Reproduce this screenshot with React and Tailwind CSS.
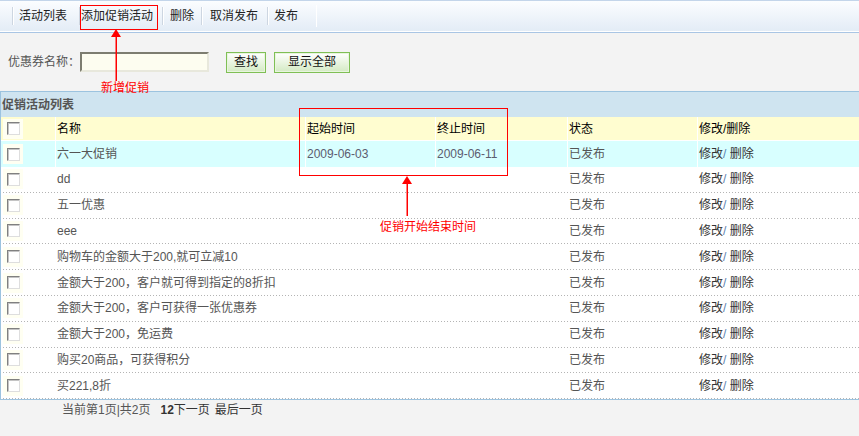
import React from "react";

const rows = [
  { name: "六一大促销", start: "2009-06-03", end: "2009-06-11" },
  { name: "dd" },
  { name: "五一优惠" },
  { name: "eee" },
  { name: "购物车的金额大于200,就可立减10" },
  { name: "金额大于200，客户就可得到指定的8折扣" },
  { name: "金额大于200，客户可获得一张优惠券" },
  { name: "金额大于200，免运费" },
  { name: "购买20商品，可获得积分" },
  { name: "买221,8折" },
];

const Sep = () => (
  <div className="flex h-[18px]">
    <div className="w-px bg-[#cdd6e1]" />
    <div className="w-px bg-white" />
  </div>
);

const Checkbox = () => (
  <div className="flex h-[20px] w-[20px] items-center bg-[#fffff2] pl-[4px]">
    <div className="h-[13px] w-[13px] border border-t-[#808080] border-l-[#808080] border-b-[#dedede] border-r-[#dedede] bg-white shadow-[inset_1px_1px_0_#c4c4c4]" />
  </div>
);

const Row = ({ row, hot }) => (
  <div
    className={
      "grid grid-cols-[54px_250px_130px_132px_130px_1fr] items-stretch " +
      (hot ? "h-[26px] bg-[#d8ffff]" : "h-[24.8px] bg-white")
    }
  >
    <div className="flex items-center pl-[2px]">
      <Checkbox />
    </div>
    <div className="flex items-center border-l border-white pl-[1px] text-[#555]">{row.name}</div>
    <div className="flex items-center border-l border-white pl-[1px] text-[#5c5c70]">{row.start}</div>
    <div className="flex items-center border-l border-white pl-[1px] text-[#5c5c70]">{row.end}</div>
    <div className="flex items-center border-l border-white pl-[1px] text-[#555]">已发布</div>
    <div className="flex items-center border-l border-white pl-[1px] text-[#333]">
      修改<span className="text-[#5a7fb0]">/</span>&nbsp;删除
    </div>
  </div>
);

const Dots = () => (
  <div className="ml-[2px] h-px bg-[repeating-linear-gradient(to_right,#b4b4b4_0_1px,transparent_1px_3px)]" />
);

export default function App() {
  return (
    <div className="relative h-[436px] w-[859px] overflow-hidden bg-[#f3f3f3] font-['Liberation_Sans','Noto_Sans_CJK_SC',sans-serif] text-[12px] leading-[14px]">
      {/* toolbar */}
      <div className="flex h-[31px] items-center border-t border-[#c3d5ea] bg-[linear-gradient(#fbfdff,#e3ecf6)] pl-[12px] text-[#222]">
        <Sep />
        <span className="ml-[5px] mr-[12px]">活动列表</span>
        <Sep />
        <span className="mr-[9px]">添加促销活动</span>
        <Sep />
        <span className="ml-[6px] mr-[7px]">删除</span>
        <Sep />
        <span className="ml-[7px] mr-[9px]">取消发布</span>
        <Sep />
        <span className="ml-[5px] mr-[18px]">发布</span>
        <div className="h-[22px] w-px bg-white" />
      </div>
      <div className="h-px bg-white" />
      <div className="h-px bg-[#a9c5e4]" />

      {/* search */}
      <div className="flex h-[58px] items-center pl-[8px] text-[#555]">
        <span>优惠券名称：</span>
        <div className="h-[20px] w-[129px] border-2 border-t-[#7d7d70] border-l-[#7d7d70] border-b-[#e8e8dc] border-r-[#e8e8dc] bg-[#fdfdf0]" />
        <button className="ml-[17px] h-[21px] w-[40px] border border-[#7fbf55] bg-[linear-gradient(#ffffff,#d3eac3)] text-[#111] shadow-[inset_0_0_0_1px_#e8f5de]">
          查找
        </button>
        <button className="ml-[8px] h-[21px] w-[76px] border border-[#7fbf55] bg-[linear-gradient(#ffffff,#d3eac3)] text-[#111] shadow-[inset_0_0_0_1px_#e8f5de]">
          显示全部
        </button>
      </div>

      {/* list panel */}
      <div className="border-t border-b border-l border-[#9cc3df] bg-white">
        <div className="flex h-[25px] items-center bg-[#cfe4f0] pl-[1px] font-bold text-[#555]">促销活动列表</div>
        <div className="grid h-[24px] grid-cols-[54px_250px_130px_132px_130px_1fr] border-b border-white bg-[#fffdd0] text-black">
          <div className="flex items-center pl-[2px]">
            <Checkbox />
          </div>
          <div className="flex items-center border-l border-white pl-[1px]">名称</div>
          <div className="flex items-center border-l border-white pl-[1px]">起始时间</div>
          <div className="flex items-center border-l border-white pl-[1px]">终止时间</div>
          <div className="flex items-center border-l border-white pl-[1px]">状态</div>
          <div className="flex items-center border-l border-white pl-[1px]">修改/删除</div>
        </div>
        {rows.map((r, i) => (
          <div key={i}>
            <Row row={r} hot={i === 0} />
            {i > 0 && <Dots />}
          </div>
        ))}
      </div>

      {/* pager */}
      <div className="flex pl-[62px] pt-[2px] leading-[16px] text-[#555]">
        <span>当前第1页|共2页</span>
        <span className="ml-[10px] font-bold text-[#333]">12</span>
        <span className="text-[#333]">下一页</span>
        <span className="ml-[5px] text-[#333]">最后一页</span>
      </div>

      {/* annotations */}
      <div className="absolute left-[80px] top-[5px] h-[25px] w-[78px] border border-[#ff0000]" />
      <svg className="absolute left-[110px] top-[28px]" width="14" height="54" viewBox="0 0 14 54">
        <polygon points="6,1 1,9 11,9" fill="#ff0000" />
        <rect x="5.5" y="8" width="1.5" height="45" fill="#ff0000" />
      </svg>
      <div className="absolute left-[101px] top-[81px] text-[#ff0000]">新增促销</div>

      <div className="absolute left-[299px] top-[108px] h-[68px] w-[209px] border border-[#ff0000]" />
      <svg className="absolute left-[401px] top-[175px]" width="14" height="42" viewBox="0 0 14 42">
        <polygon points="6,1 1,9 11,9" fill="#ff0000" />
        <rect x="5.5" y="8" width="1.5" height="33" fill="#ff0000" />
      </svg>
      <div className="absolute left-[380px] top-[220px] text-[#ff0000]">促销开始结束时间</div>
    </div>
  );
}
